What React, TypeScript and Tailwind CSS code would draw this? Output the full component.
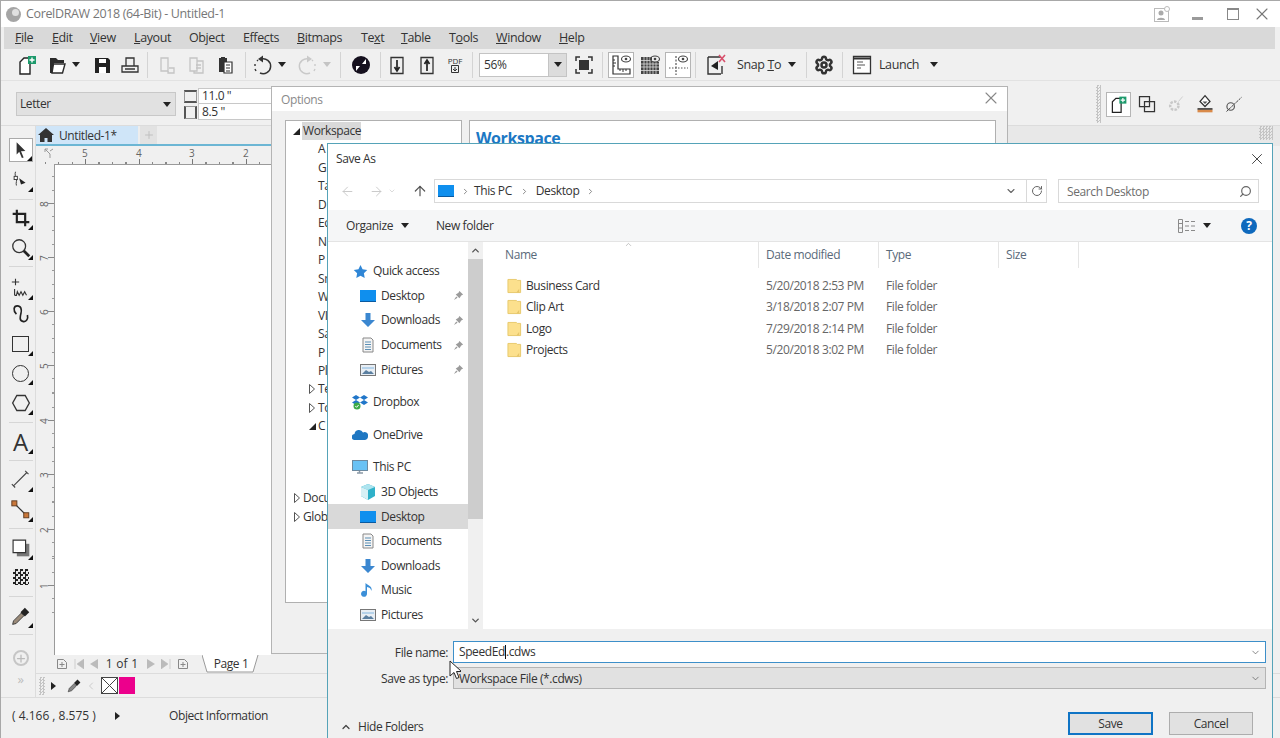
import React from 'react';
import { Settings, ChevronDown, RotateCw, Search, ArrowUp, ArrowLeft, ArrowRight, ChevronRight, ChevronUp, X, Plus } from 'lucide-react';

const MENUS = [
  { pre: '', key: 'F', post: 'ile', cls: 'w-[37px]' },
  { pre: '', key: 'E', post: 'dit', cls: 'w-[38px]' },
  { pre: '', key: 'V', post: 'iew', cls: 'w-[44px]' },
  { pre: '', key: 'L', post: 'ayout', cls: 'w-[55px]' },
  { pre: 'Ob', key: 'j', post: 'ect', cls: 'w-[54px]' },
  { pre: 'Effe', key: 'c', post: 'ts', cls: 'w-[54px]' },
  { pre: '', key: 'B', post: 'itmaps', cls: 'w-[64px]' },
  { pre: 'Te', key: 'x', post: 't', cls: 'w-[40px]' },
  { pre: '', key: 'T', post: 'able', cls: 'w-[48px]' },
  { pre: 'T', key: 'o', post: 'ols', cls: 'w-[47px]' },
  { pre: '', key: 'W', post: 'indow', cls: 'w-[63px]' },
  { pre: '', key: 'H', post: 'elp', cls: 'w-[40px]' },
];

const TREE = ['A', 'G', 'Ta', 'D', 'Ec', 'N', 'P', 'Sr', 'W', 'VI', 'Sa', 'P', 'Pl'];

const FILES = [
  { name: 'Business Card', date: '5/20/2018 2:53 PM' },
  { name: 'Clip Art', date: '3/18/2018 2:07 PM' },
  { name: 'Logo', date: '7/29/2018 2:14 PM' },
  { name: 'Projects', date: '5/20/2018 3:02 PM' },
];

function Ic({ children, cls = 'w-6 h-6' }: { children: React.ReactNode; cls?: string }) {
  return (
    <svg viewBox="0 0 24 24" className={`shrink-0 ${cls}`}>
      {children}
    </svg>
  );
}

const Caret = ({ cls = '' }: { cls?: string }) => (
  <svg viewBox="0 0 8 5" className={`w-2 h-[5px] shrink-0 ${cls}`}>
    <path d="M0 0h8L4 5z" fill="#222" />
  </svg>
);

const Sep = ({ cls = '' }: { cls?: string }) => <div className={`w-px h-[26px] bg-[#d4d4d4] shrink-0 ${cls}`} />;
const Grip = ({ cls = '' }: { cls?: string }) => (
  <div className={`shrink-0 bg-[repeating-conic-gradient(#c4c4c4_0_25%,transparent_0_50%)] bg-[length:3px_3px] ${cls}`} />
);

const NewDoc = ({ cls }: { cls?: string }) => (
  <Ic cls={cls}>
    <path d="M9 5h6v16H5V9z" fill="#fff" stroke="#222" strokeWidth="1.4" />
    <rect x="13" y="3" width="8" height="8" fill="#1d9a6c" />
    <path d="M17 4.500v5M14.500 7h5" stroke="#fff" strokeWidth="1.4" />
  </Ic>
);
const OpenFolder = () => (
  <Ic>
    <path d="M5 5h6l2 2h6v3H9l-2 10H5z" fill="#2a2a2a" />
    <path d="M8.500 11H20l-2.500 9H7z" fill="#fff" stroke="#2a2a2a" strokeWidth="1.4" />
  </Ic>
);
const Floppy = () => (
  <Ic>
    <path d="M5 5h13l2 2v13H5z" fill="#222" />
    <rect x="9" y="6" width="7" height="4" fill="#fff" />
    <rect x="9" y="14" width="7" height="6" fill="#fff" />
  </Ic>
);
const Printer = () => (
  <Ic>
    <path d="M8 13V5h8v8M4 13h16v6H4zM7 16h10" fill="none" stroke="#333" strokeWidth="1.3" />
  </Ic>
);
const GreyDoc = ({ two }: { two?: boolean }) => (
  <Ic>
    <path d="M6 5h7v13H6z" fill="none" stroke="#c4c4c4" strokeWidth="1.3" />
    <path d={two ? 'M13 8h6v12h-9v-2M12 12h5M12 15h5' : 'M14 15h5v5h-6v-2'} fill="none" stroke="#c4c4c4" strokeWidth="1.3" />
  </Ic>
);
const Paste = () => (
  <Ic>
    <path d="M6 5h8v14H6z" fill="#333" />
    <path d="M8 4h4v3H8z" fill="#333" />
    <path d="M11 9h8v11h-8z" fill="#fff" stroke="#333" strokeWidth="1.2" />
    <path d="M13 12h4M13 15h4M13 18h4" stroke="#333" strokeWidth="1.1" />
  </Ic>
);
const Undo = ({ grey }: { grey?: boolean }) => {
  const c = grey ? '#c9c9c9' : '#333';
  return (
    <Ic>
      <g transform={grey ? 'matrix(-1 0 0 1 24 0)' : undefined}>
        <path d="M10 6a7.500 7.500 0 1 1-1 14" fill="none" stroke={c} strokeWidth="1.5" />
        <path d="M5 18l-1-2M4 13v-2M6 8l1-1" stroke={c} strokeWidth="1.4" />
        <path d="M7 6l5-3.500v7z" fill={c} />
      </g>
    </Ic>
  );
};
const CorelBall = () => (
  <Ic>
    <circle cx="12" cy="12" r="9" fill="#15101e" />
    <path d="M13 11l4-5v5zM11 13l-4 5v-5z" fill="#fff" />
  </Ic>
);
const BoxArrow = ({ up }: { up?: boolean }) => (
  <Ic>
    <path d="M6 4.500h12v16H6z" fill="none" stroke="#333" strokeWidth="1.3" />
    <path d={up ? 'M12 18V9M9.500 11l2.500-4 2.500 4' : 'M12 7v9M9.500 14l2.500 4 2.500-4'} fill="none" stroke="#222" strokeWidth="1.7" />
  </Ic>
);
const FullPage = () => (
  <Ic>
    <rect x="7" y="7" width="10" height="10" fill="#333" />
    <path d="M4 8V4h4M16 4h4v4M20 16v4h-4M8 20H4v-4" fill="none" stroke="#333" strokeWidth="1.5" />
  </Ic>
);
const Eye = () => (
  <>
    <ellipse cx="17" cy="6" rx="4.500" ry="3" fill="none" stroke="#444" strokeWidth="1.1" />
    <circle cx="17" cy="6" r="1.300" fill="#444" />
  </>
);
const Rulers = () => (
  <Ic>
    <path d="M4 3h5v13h12v5H4z" fill="#fff" stroke="#333" strokeWidth="1.2" />
    <path d="M11 16v2M14 16v3M17 16v2M4 7h2M4 10h3M4 13h2" stroke="#333" />
    <Eye />
  </Ic>
);
const GridEye = () => (
  <Ic>
    <path d="M3 4h11v5h7v12H3z" fill="#444" />
    <path d="M6 4v17M9 4v17M12 4v17M15 9v12M18 9v12M3 7.500h11M3 11h18M3 14h18M3 17.500h18" stroke="#ddd" strokeWidth=".8" />
    <Eye />
  </Ic>
);
const Guides = () => (
  <Ic>
    <path d="M10 3v19" stroke="#333" strokeDasharray="2 1.500" />
    <path d="M3 15h19" stroke="#555" strokeDasharray="1.500 1.500" />
    <Eye />
  </Ic>
);
const SnapOff = () => (
  <Ic>
    <path d="M4 4h13M4 4v17h13M18 13v8" fill="none" stroke="#333" strokeWidth="1.4" />
    <path d="M14 8l-7 5 7 4z" fill="#222" />
    <path d="M15 2l6 7M21 2l-6 7" stroke="#d8506c" strokeWidth="1.6" />
  </Ic>
);
const Launch = () => (
  <Ic>
    <path d="M3.500 3.500h17v17h-17z" fill="#fff" stroke="#333" strokeWidth="1.3" />
    <path d="M3 5.500h18" stroke="#333" strokeWidth="2" />
    <path d="M7 9h6M7 12h8M7 15h4" stroke="#555" strokeWidth="1.2" />
  </Ic>
);

const Corner = () => (
  <svg viewBox="0 0 5 5" className="absolute right-0 bottom-0 w-[5px] h-[5px]">
    <path d="M5 0v5H0z" fill="#111" />
  </svg>
);

const ToolBtn = ({ children, cls = '', corner = true }: { children: React.ReactNode; cls?: string; corner?: boolean }) => (
  <div className={`relative w-6 h-6 flex items-center justify-center shrink-0 ${cls}`}>
    {children}
    {corner && <Corner />}
  </div>
);
const ToolSep = ({ cls = '' }: { cls?: string }) => <div className={`w-[24px] h-px bg-[#d6d6d6] shrink-0 ${cls}`} />;

function Toolbox() {
  return (
    <div className="w-[32px] ml-[3px] pl-[2px] shrink-0 flex flex-col items-center pt-[12px] border-r border-r-[#dcdcdc]">
      <div className="w-[24px] h-[24px] border border-[#aaa] bg-white relative flex items-center justify-center">
        <svg viewBox="0 0 16 20" className="w-[14px] h-[18px]"><path d="M3 1l10 10-5 .5 3 7-2 .5-3-7-3 3z" fill="#333" /></svg>
        <Corner />
      </div>
      <ToolBtn cls="mt-[6px]">
        <Ic cls="w-[22px] h-[22px]">
          <path d="M6 3c-1 3 0 5 1 7s-1 5 0 8" fill="none" stroke="#333" />
          <rect x="4.500" y="8" width="3.500" height="3.500" fill="#fff" stroke="#333" />
          <path d="M10 10l7 5-5 2z" fill="#222" />
        </Ic>
      </ToolBtn>
      <ToolSep cls="mt-[7px]" />
      <ToolBtn cls="mt-[6px]">
        <Ic cls="w-[20px] h-[20px]"><path d="M7 2v15h15M2 7h15v15" fill="none" stroke="#222" strokeWidth="2.6" /></Ic>
      </ToolBtn>
      <ToolBtn cls="mt-[6px]">
        <Ic cls="w-[22px] h-[22px]">
          <circle cx="10" cy="10" r="7" fill="none" stroke="#333" strokeWidth="1.4" />
          <path d="M15 15l6 6" stroke="#222" strokeWidth="3" />
        </Ic>
      </ToolBtn>
      <ToolSep cls="mt-[6px]" />
      <ToolBtn cls="mt-[9px]">
        <Ic cls="w-[22px] h-[22px]">
          <path d="M6 2v7M2 5.500h8" stroke="#333" strokeWidth="1.2" />
          <path d="M5 20v-7M5 20h2l1-4 2 4 2-4 2 4 2-4 2 4" fill="none" stroke="#333" strokeWidth="1.2" />
        </Ic>
      </ToolBtn>
      <ToolBtn cls="mt-[3px]" corner={false}>
        <Ic cls="w-[22px] h-[22px]">
          <path d="M7 11C3 7 4 2 8 2s5 4 4 8-2 8 2 9 6-3 5-7" fill="none" stroke="#222" strokeWidth="1.8" />
        </Ic>
      </ToolBtn>
      <ToolBtn cls="mt-[5px]">
        <div className="w-[17px] h-[16px] border-[1.5px] border-[#333]" />
      </ToolBtn>
      <ToolBtn cls="mt-[5px]">
        <div className="w-[17px] h-[17px] rounded-full border-[1.5px] border-[#333]" />
      </ToolBtn>
      <ToolBtn cls="mt-[6px]">
        <Ic cls="w-[20px] h-[20px]"><path d="M7 3h10l5 9-5 9H7l-5-9z" fill="none" stroke="#333" strokeWidth="1.6" /></Ic>
      </ToolBtn>
      <ToolSep cls="mt-[7px]" />
      <ToolBtn cls="mt-[7px]">
        <span className="text-[24px] leading-none text-[#333] tracking-normal">A</span>
      </ToolBtn>
      <ToolSep cls="mt-[6px]" />
      <ToolBtn cls="mt-[7px]">
        <Ic cls="w-[20px] h-[20px]"><path d="M3 19L19 3M1 17l4 4M17 1l4 4" fill="none" stroke="#444" strokeWidth="1.3" /></Ic>
      </ToolBtn>
      <ToolBtn cls="mt-[6px]">
        <Ic cls="w-[22px] h-[22px]">
          <path d="M5 5l13 13" stroke="#333" strokeWidth="1.3" />
          <rect x="2" y="2" width="5.500" height="5.500" fill="#c9773a" stroke="#5c3a20" />
          <rect x="15" y="15" width="5.500" height="5.500" fill="#c9773a" stroke="#5c3a20" />
        </Ic>
      </ToolBtn>
      <ToolSep cls="mt-[6px]" />
      <ToolBtn cls="mt-[7px]">
        <Ic cls="w-[20px] h-[20px]">
          <path d="M7 7h15v15H7z" fill="#777" />
          <path d="M2.500 2.500h15v15h-15z" fill="#fff" stroke="#333" strokeWidth="1.4" />
        </Ic>
      </ToolBtn>
      <ToolBtn cls="mt-[5px]" corner={false}>
        <div className="w-[16px] h-[16px] bg-[repeating-conic-gradient(#222_0_25%,#e8e8e8_0_50%)] bg-[length:5px_5px]" />
      </ToolBtn>
      <ToolSep cls="mt-[7px]" />
      <ToolBtn cls="mt-[7px]">
        <Ic cls="w-[21px] h-[21px]">
          <path d="M3 21l1-4 9-9 3 3-9 9z" fill="#9a8a78" stroke="#333" />
          <path d="M12 7l5-5 5 5-5 5z" fill="#222" />
        </Ic>
      </ToolBtn>
      <ToolSep cls="mt-[6px]" />
      <div className="mt-[15px] w-[16px] h-[16px] rounded-full border-2 border-[#c6c6c6] flex items-center justify-center">
        <Plus className="w-[13px] h-[13px] text-[#bbb]" strokeWidth={2.5} />
      </div>
      <span className="mt-[7px] text-[13px] leading-none text-[#bdbdbd]">»</span>
    </div>
  );
}

function TopRuler() {
  const xs = [85, 139, 192, 246];
  return (
    <svg width="236" height="18" className="shrink-0">
      <path d="M9 3l5 5M9 3h3M9 3v3M14 5l3-2M14 8v4" fill="none" stroke="#999" />
      {xs.map((x, i) => (
        <g key={x}>
          <text x={x - 36 - 3} y="11" fontSize="10" fill="#666">{5 - i}</text>
          <path d={`M${x - 36 + 0.5} 13v5`} stroke="#777" />
          {[-40, -27, -13, 13, 27, 40].map((d) => (
            <path key={d} d={`M${x - 36 + d + 0.5} 16v2`} stroke="#888" />
          ))}
        </g>
      ))}
    </svg>
  );
}

function VRuler() {
  const ys = [203, 257, 311, 365, 420, 474, 529, 585];
  return (
    <svg width="18" height="491" className="shrink-0">
      {ys.map((y, i) => (
        <g key={y}>
          <text x="0" y="0" fontSize="10" fill="#666" transform={`translate(12 ${y - 164 + 4}) rotate(-90)`}>{8 - i}</text>
          <path d={`M12 ${y - 164 + 0.5}h6`} stroke="#888" />
          {[-27, -13, 13, 27].map((d) => (
            <path key={d} d={`M16 ${y - 164 + d + 0.5}h2`} stroke="#999" />
          ))}
        </g>
      ))}
    </svg>
  );
}

const Tri = ({ open, cls = '' }: { open?: boolean; cls?: string }) =>
  open ? (
    <svg viewBox="0 0 7 7" className={`w-[7px] h-[7px] shrink-0 ${cls}`}><path d="M7 0v7H0z" fill="#222" /></svg>
  ) : (
    <svg viewBox="0 0 6 10" className={`w-[6px] h-[10px] shrink-0 ${cls}`}><path d="M.5.500l5 4.500-5 4.500z" fill="#fff" stroke="#555" /></svg>
  );

function OptionsDialog() {
  return (
    <div className="absolute left-[270px] top-[85px] w-[737px] h-[568px] border border-[#b4b4b4] bg-[#f0f0f0] flex flex-col">
      <div className="h-[24px] bg-white flex items-center justify-between pl-[9px] pr-[6px] shrink-0">
        <span className="text-[12px] text-[#8a8a8a] pt-[1px]">Options</span>
        <X className="w-[20px] h-[20px] text-[#888] -translate-y-[1px]" strokeWidth={1.3} />
      </div>
      <div className="flex gap-[7px] pl-[13px] pt-[9px] pr-[11px]">
        <div className="w-[177px] h-[483px] border border-[#b0b0b0] bg-white text-[12px] text-[#333]">
          <div className="flex items-center h-[18px] mt-[1px] pl-[7px] gap-[2px]">
            <Tri open />
            <span className="bg-[#d9d9d9] px-px w-[59px]">Workspace</span>
          </div>
          <div className="flex flex-col">
            {TREE.map((t, i) => (
              <div key={i} className="h-[18.5px] pl-[32px] leading-[18px]">{t}</div>
            ))}
            <div className="h-[19px] -mt-[1.5px] pl-[23px] flex items-center gap-[3px]"><Tri /> Te</div>
            <div className="h-[19px] pl-[23px] flex items-center gap-[3px]"><Tri /> To</div>
            <div className="h-[18px] pl-[23px] flex items-center gap-[2px]"><Tri open /> C</div>
            <div className="h-[18.5px] pl-[8px] mt-[54px] flex items-center gap-[3px]"><Tri /> Docu</div>
            <div className="h-[19px] pl-[8px] flex items-center gap-[3px]"><Tri /> Glob</div>
          </div>
        </div>
        <div className="flex-1 h-[483px] border border-[#b0b0b0] bg-white px-[6px] pt-[6px]">
          <div className="text-[16px] font-bold text-[#1c78c4] leading-[22px]">Workspace</div>
        </div>
      </div>
    </div>
  );
}

const Desktop = () => (
  <svg viewBox="0 0 16 14" className="w-[16px] h-[14px] shrink-0"><rect width="16" height="12" y="1" fill="#0f8fee" /><rect y="12" width="16" height="1" fill="#0a5aa0" /></svg>
);
const DownloadsI = () => (
  <svg viewBox="0 0 16 16" className="w-[16px] h-[16px] shrink-0"><path d="M5.500 1h5v7H15l-7 7-7-7h4.500z" fill="#3b87d0" /></svg>
);
const DocI = () => (
  <svg viewBox="0 0 16 16" className="w-[16px] h-[16px] shrink-0"><path d="M3 1h8l2 2v12H3z" fill="#f4f4f4" stroke="#888" /><path d="M5 5h6M5 7.500h6M5 10h6M5 12.500h6" stroke="#5b8fb5" /></svg>
);
const PicI = () => (
  <svg viewBox="0 0 16 14" className="w-[16px] h-[14px] shrink-0"><rect x=".5" y="1.500" width="15" height="11" fill="#e8eef4" stroke="#777" /><path d="M2 11l4-4 3 2 2-1 3 3z" fill="#5a7fa0" /><path d="M2 4h12v2H2z" fill="#b5d2ea" /></svg>
);
const Pin = () => (
  <svg viewBox="0 0 12 12" className="w-[11px] h-[11px] shrink-0"><path d="M7 1l4 4-2 1-2 3-4-4 3-2zM3.500 7L1 11l4-2.500" fill="#9b9b9b" /></svg>
);
const Star = () => (
  <svg viewBox="0 0 16 16" className="w-[15px] h-[15px] shrink-0"><path d="M8 1l2.200 4.600 5 .7-3.600 3.500.9 5L8 12.400 3.500 14.800l.9-5L.8 6.300l5-.7z" fill="#2f86d6" /></svg>
);
const DropboxI = () => (
  <svg viewBox="0 0 16 16" className="w-[16px] h-[16px] shrink-0">
    <path d="M4 1l4 2.500L4 6 0 3.500zM12 1l4 2.500L12 6 8 3.500zM4 6l4 2.500L4 11 0 8.500zM12 6l4 2.500-4 2.500-4-2.500z" fill="#2076c9" />
    <circle cx="5" cy="12" r="3.500" fill="#3daa48" />
    <path d="M3.300 12l1.300 1.300 2-2.300" fill="none" stroke="#fff" />
  </svg>
);
const Cloud = () => (
  <svg viewBox="0 0 16 11" className="w-[16px] h-[11px] shrink-0"><path d="M3 11a3 3 0 0 1-.5-6A4.500 4.500 0 0 1 11 3.500 3.500 3.500 0 0 1 16 7.500 3.500 3.500 0 0 1 13 11z" fill="#1f77c2" /></svg>
);
const PcI = () => (
  <svg viewBox="0 0 16 16" className="w-[16px] h-[16px] shrink-0"><rect x=".5" y="1.500" width="15" height="10" fill="#69c2f5" stroke="#6d8aa0" /><path d="M5 14h6M7.500 12v2" stroke="#8a99a6" strokeWidth="1.500" /></svg>
);
const Cube = () => (
  <svg viewBox="0 0 16 16" className="w-[16px] h-[16px] shrink-0"><path d="M8 0l7 3v9l-7 4-7-4V3z" fill="#2fb1c9" /><path d="M8 0l7 3-7 3-7-3z" fill="#aee4ef" /><path d="M1 3l7 3v10l-7-4z" fill="#d7f0f5" /></svg>
);
const Note = () => (
  <svg viewBox="0 0 16 16" className="w-[16px] h-[16px] shrink-0"><path d="M7 1v10.500a3 3 0 1 1-1.500-2.300V1c3 3 7 3 6 8-1-3-2-3.500-4.500-4z" fill="#3b8fd8" /></svg>
);
const Folder = () => (
  <svg viewBox="0 0 16 16" className="w-[15px] h-[16px] shrink-0"><path d="M1 1h9l1 1 3.500 0V15H1z" fill="#fce08d" stroke="#e6c76a" /><path d="M13 11v4h-3z" fill="#e6c56a" /></svg>
);

function NavRow({ icon, label, pin, child, sel, cls = '' }: { icon: React.ReactNode; label: string; pin?: boolean; child?: boolean; sel?: boolean; cls?: string }) {
  return (
    <div className={`h-[24.6px] flex items-center gap-[5px] shrink-0 ${child ? 'pl-[32px]' : 'pl-[24px]'} ${sel ? 'bg-[#d9d9d9]' : ''} ${cls}`}>
      <div className="w-[16px] flex justify-center shrink-0">{icon}</div>
      <span className="flex-1">{label}</span>
      {pin && <div className="mr-[4px]"><Pin /></div>}
    </div>
  );
}

function SaveAsDialog() {
  return (
    <div className="absolute left-[326px] top-[142px] w-[946px] h-[600px] bg-white border border-[#55a3b8] flex flex-col text-[12px] text-[#333]">
      <div className="h-[31px] pb-[2px] flex items-center justify-between pl-[8px] pr-[6px] shrink-0">
        <span>Save As</span>
        <X className="w-[18px] h-[18px] text-[#333]" strokeWidth={1.2} />
      </div>
      <div className="h-[35px] flex items-start pt-[4px] shrink-0">
        <div className="w-[106px] h-[24px] flex items-center shrink-0 text-[#c8c8c8]">
          <ArrowLeft className="ml-[12px] w-[15px] h-[15px]" strokeWidth={1.5} />
          <ArrowRight className="ml-[14px] w-[15px] h-[15px]" strokeWidth={1.5} />
          <ChevronDown className="ml-[4px] w-[8px] h-[8px]" strokeWidth={2} />
          <ArrowUp className="ml-[16px] w-[16px] h-[16px] text-[#555]" strokeWidth={1.8} />
        </div>
        <div className="w-[613px] h-[24px] border border-[#d9d9d9] flex items-center shrink-0">
          <div className="ml-[3px]"><Desktop /></div>
          <ChevronRight className="ml-[7px] w-[9px] h-[9px] text-[#666]" strokeWidth={2} />
          <span className="ml-[4px]">This PC</span>
          <ChevronRight className="ml-[8px] w-[9px] h-[9px] text-[#666]" strokeWidth={2} />
          <span className="ml-[7px]">Desktop</span>
          <ChevronRight className="ml-[7px] w-[9px] h-[9px] text-[#666]" strokeWidth={2} />
          <div className="ml-auto w-[30px] flex justify-center"><ChevronDown className="w-[12px] h-[12px] text-[#666]" strokeWidth={2.2} /></div>
          <div className="w-[20px] h-full border-l border-l-[#d9d9d9] flex items-center justify-center"><RotateCw className="w-[12px] h-[12px] text-[#666]" strokeWidth={2} /></div>
        </div>
        <div className="ml-[11px] w-[201px] h-[24px] border border-[#d9d9d9] flex items-center justify-between pl-[8px] pr-[6px] shrink-0">
          <span className="text-[#6d6d6d] pt-[1px]">Search Desktop</span>
          <Search className="w-[13px] h-[13px] text-[#666] -scale-x-100" strokeWidth={2.2} />
        </div>
      </div>
      <div className="h-[32px] bg-[#f5f6f7] flex items-center shrink-0 border-b border-b-[#e4e4e4]">
        <span className="ml-[18px]">Organize</span>
        <Caret cls="ml-[8px]" />
        <span className="ml-[27px]">New folder</span>
        <svg viewBox="0 0 18 14" className="ml-auto w-[18px] h-[14px]"><path d="M.5.500h4v13h-4zM.5 4.500h4M.5 9h4M7 2.500h4M13 2.500h4M7 7h4M13 7h4M7 11.500h4M13 11.500h4" fill="none" stroke="#8a8a8a" /></svg>
        <Caret cls="ml-[7px]" />
        <div className="ml-[30px] mr-[15px] w-[16px] h-[16px] rounded-full bg-[#0e69bd] text-white font-bold text-[12px] leading-[16px] text-center">?</div>
      </div>
      <div className="flex-1 min-h-0 flex">
        <div className="w-[140px] pt-[17px] shrink-0 flex flex-col">
          <NavRow icon={<Star />} label="Quick access" />
          <NavRow icon={<Desktop />} label="Desktop" pin child />
          <NavRow icon={<DownloadsI />} label="Downloads" pin child />
          <NavRow icon={<DocI />} label="Documents" pin child />
          <NavRow icon={<PicI />} label="Pictures" pin child />
          <NavRow icon={<DropboxI />} label="Dropbox" cls="mt-[8px]" />
          <NavRow icon={<Cloud />} label="OneDrive" cls="mt-[8px]" />
          <NavRow icon={<PcI />} label="This PC" cls="mt-[8px]" />
          <NavRow icon={<Cube />} label="3D Objects" child />
          <NavRow icon={<Desktop />} label="Desktop" child sel />
          <NavRow icon={<DocI />} label="Documents" child />
          <NavRow icon={<DownloadsI />} label="Downloads" child />
          <NavRow icon={<Note />} label="Music" child />
          <NavRow icon={<PicI />} label="Pictures" child />
        </div>
        <div className="w-[15px] shrink-0 bg-[#f0f0f0] flex flex-col items-center h-[387px]">
          <ChevronUp className="h-[17px] w-[11px] text-[#555] shrink-0" strokeWidth={3} />
          <div className="w-full h-[260px] bg-[#cdcdcd] shrink-0" />
          <ChevronDown className="mt-auto h-[17px] w-[11px] text-[#555] shrink-0" strokeWidth={3} />
        </div>
        <div className="flex-1 relative">
          <ChevronUp className="absolute left-[140px] -top-[2px] w-[11px] h-[9px] text-[#999]" strokeWidth={1.5} />
          <div className="grid grid-cols-[276px_120px_120px_80px] h-[26px] text-[#5a6a7a] items-center">
            <span className="pl-[22px] h-full flex items-center border-r border-r-[#e5e5e5]">Name</span>
            <span className="pl-[7px] h-full flex items-center border-r border-r-[#e5e5e5]">Date modified</span>
            <span className="pl-[7px] h-full flex items-center border-r border-r-[#e5e5e5]">Type</span>
            <span className="pl-[7px] h-full flex items-center border-r border-r-[#e5e5e5]">Size</span>
          </div>
          <div className="pt-[7px]">
            {FILES.map((f) => (
              <div key={f.name} className="grid grid-cols-[276px_120px_120px_80px] h-[21.5px] items-center">
                <div className="flex items-center gap-[4px] pl-[24px]">
                  <Folder />
                  <span>{f.name}</span>
                </div>
                <span className="pl-[7px] text-[#666]">{f.date}</span>
                <span className="pl-[7px] text-[#666]">File folder</span>
                <span />
              </div>
            ))}
          </div>
        </div>
      </div>
      <div className="h-[113px] shrink-0 bg-[#f0f0f0] flex flex-col pr-[6px]">
        <div className="mt-[12px] h-[22px] flex items-center">
          <span className="w-[120px] text-right shrink-0 pt-[1px]">File name:</span>
          <div className="ml-[5px] flex-1 h-full bg-white border border-[#3d8fc9] flex items-center pl-[5px] pr-[4px]">
            <span>SpeedEd</span>
            <span className="w-px h-[14px] bg-[#111]" />
            <span>.cdws</span>
            <ChevronDown className="ml-auto w-[11px] h-[11px] text-[#555]" strokeWidth={1.5} />
          </div>
        </div>
        <div className="mt-[4px] h-[22px] flex items-center">
          <span className="w-[120px] text-right shrink-0 pt-[1px]">Save as type:</span>
          <div className="ml-[5px] flex-1 h-full bg-[#e1e1e1] border border-[#b4b4b4] flex items-center pl-[5px] pr-[4px]">
            <span className="pt-[1px]">Workspace File (*.cdws)</span>
            <ChevronDown className="ml-auto w-[11px] h-[11px] text-[#555]" strokeWidth={1.5} />
          </div>
        </div>
        <div className="mt-[23px] h-[23px] flex items-center">
          <ChevronUp className="ml-[12px] mt-[6px] w-[12px] h-[12px] text-[#444]" strokeWidth={2.5} />
          <span className="ml-[6px] pt-[7px]">Hide Folders</span>
          <div className="ml-auto w-[85px] h-[23px] bg-[#e1e1e1] border-2 border-[#0f74c5] flex items-center justify-center">Save</div>
          <div className="ml-[16px] mr-[13px] w-[84px] h-[23px] bg-[#e1e1e1] border border-[#adadad] flex items-center justify-center">Cancel</div>
        </div>
      </div>
    </div>
  );
}

export default function App() {
  return (
    <div className="relative w-[1280px] h-[738px] overflow-hidden bg-[#f0f0f0] flex flex-col font-['Open_Sans',sans-serif] text-[12px] tracking-[-0.4px] text-[#333] border-l border-l-[#a8a8a8] border-t border-t-[#a8a8a8]">
      <div className="h-[26px] bg-white flex items-center shrink-0 pl-[5px]">
        <div className="w-[15px] h-[15px] rounded-full bg-[#a5a5a5] flex items-center justify-center">
          <div className="w-[7px] h-[7px] rounded-full bg-[#e0e0e0] translate-x-[2px] -translate-y-[2px]" />
        </div>
        <span className="ml-[5px] text-[#777] text-[12.5px] tracking-[-0.35px] pt-[1px]">CorelDRAW 2018 (64-Bit) - Untitled-1</span>
        <svg viewBox="0 0 16 16" className="ml-auto w-[16px] h-[16px]">
          <rect x=".5" y="2.500" width="14" height="13" fill="none" stroke="#bbb" />
          <circle cx="7" cy="7" r="2.500" fill="#aaa" />
          <path d="M3 14c0-3 8-3 8 0z" fill="#aaa" />
          <circle cx="13" cy="3" r="2.500" fill="#fff" stroke="#bbb" />
        </svg>
        <div className="ml-[22px] w-[11px] h-[3px] bg-[#9a9a9a] mt-[8px]" />
        <div className="ml-[24.500px] w-[12px] h-[12px] border border-[#888] border-t-[2px]" />
        <X className="ml-[13px] mr-[8px] w-[20px] h-[20px] text-[#777]" strokeWidth={1.3} />
      </div>
      <div className="h-[22px] ml-[3px] mr-[5px] bg-[#d9d9d9] flex items-center pl-[11px] text-[12.5px] shrink-0">
        {MENUS.map((m) => (
          <span key={m.key + m.post} className={`shrink-0 ${m.cls}`}>
            {m.pre}<u>{m.key}</u>{m.post}
          </span>
        ))}
      </div>
      <div className="h-[32px] flex items-center pl-[14px] shrink-0 border-b border-b-[#e2e2e2]">
        <NewDoc />
        <div className="ml-[6px]"><OpenFolder /></div>
        <Caret cls="ml-[3px]" />
        <div className="ml-[10px]"><Floppy /></div>
        <div className="ml-[4px]"><Printer /></div>
        <Sep cls="ml-[5px]" />
        <div className="ml-[7px]"><GreyDoc /></div>
        <div className="ml-[5px]"><GreyDoc two /></div>
        <div className="ml-[5px]"><Paste /></div>
        <Sep cls="ml-[8px]" />
        <div className="ml-[5px]"><Undo /></div>
        <Caret cls="ml-[3px]" />
        <div className="ml-[9px]"><Undo grey /></div>
        <svg viewBox="0 0 8 5" className="ml-[4px] w-2 h-[5px]"><path d="M0 0h8L4 5z" fill="#c4c4c4" /></svg>
        <Sep cls="ml-[9px]" />
        <div className="ml-[8px]"><CorelBall /></div>
        <Sep cls="ml-[7px]" />
        <div className="ml-[4px]"><BoxArrow /></div>
        <div className="ml-[6px]"><BoxArrow up /></div>
        <div className="ml-[4px] w-6 h-6 flex flex-col items-center justify-center">
          <span className="text-[8px] leading-[9px] tracking-normal">PDF</span>
          <svg viewBox="0 0 8 8" className="w-[8px] h-[8px]"><path d="M.5.500h7v7h-7zM4 2v4M2 4l2 2 2-2" fill="none" stroke="#333" /></svg>
        </div>
        <Sep cls="ml-[5px]" />
        <div className="ml-[6px] w-[88px] h-[24px] bg-white border border-[#c4c4c4] flex items-center pl-[4px] shrink-0">
          <span className="pt-[1px]">56%</span>
          <div className="ml-auto w-[18px] h-full bg-[#dcdcdc] border-l border-l-[#c4c4c4] flex items-center justify-center"><Caret /></div>
        </div>
        <div className="ml-[5px]"><FullPage /></div>
        <Sep cls="ml-[6px]" />
        <div className="ml-[5px] border border-[#b5b5b5] bg-white"><Rulers /></div>
        <div className="ml-[4px]"><GridEye /></div>
        <div className="ml-[3px] border border-[#b5b5b5] bg-white"><Guides /></div>
        <Sep cls="ml-[4px]" />
        <div className="ml-[8px]"><SnapOff /></div>
        <span className="ml-[9px] w-[41px] shrink-0 text-[12.5px] whitespace-nowrap pt-[2px]">Snap <u>T</u>o</span>
        <Caret cls="ml-[10px]" />
        <Sep cls="ml-[10px]" />
        <Settings className="ml-[7px] w-[20px] h-[20px] text-[#333]" strokeWidth={3} />
        <Sep cls="ml-[8px]" />
        <div className="ml-[7px]"><Launch /></div>
        <span className="ml-[5px] w-[44px] shrink-0 text-[12.5px] pt-[2px]">Launch</span>
        <Caret cls="ml-[7px]" />
      </div>
      <div className="h-[45px] pt-[2px] flex items-center shrink-0 pl-[15px] border-b border-b-[#dcdcdc]">
        <div className="w-[160px] h-[24px] bg-[#e1e1e1] border border-[#c8c8c8] flex items-center justify-between pl-[3px] pr-[4px] shrink-0">
          <span>Letter</span>
          <Caret />
        </div>
        <div className="ml-[8px] w-[14px] flex flex-col gap-[3px] shrink-0">
          <div className="w-[13px] h-[13px] border-y-2 border-y-[#555] border-x border-x-[#999]" />
          <div className="w-[13px] h-[13px] border-x-2 border-x-[#555] border-y border-y-[#999]" />
        </div>
        <div className="w-[74px] shrink-0 flex flex-col">
          <div className="h-[16px] bg-white border border-[#c8c8c8] flex items-center pl-[3px]">11.0 "</div>
          <div className="h-[16px] bg-white border border-[#c8c8c8] border-t-0 flex items-center pl-[3px]">8.5 "</div>
        </div>
        <Grip cls="ml-[824px] w-[5px] h-[38px]" />
        <div className="ml-[5px] w-[25px] h-[25px] border border-[#b5b5b5] bg-white flex items-center justify-center"><NewDoc cls="w-[21px] h-[21px]" /></div>
        <Ic cls="ml-[6px] w-[20px] h-[20px]"><path d="M3 3h12v12H3zM9 9h12v12H9z" fill="none" stroke="#333" strokeWidth="1.5" /></Ic>
        <Ic cls="ml-[9px] w-[20px] h-[20px]"><circle cx="10" cy="14" r="5" fill="none" stroke="#c8c8c8" strokeWidth="3" strokeDasharray="3 1.500" /><path d="M15 9l5-6" stroke="#c8c8c8" /></Ic>
        <Ic cls="ml-[9px] w-[20px] h-[20px]"><path d="M12 2l6 7-6 6-6-6z" fill="#fff" stroke="#333" strokeWidth="1.5" /><path d="M9 9h6l-3 3z" fill="#555" /><rect x="3" y="17" width="18" height="2" fill="#333" /><rect x="3" y="19" width="18" height="3" fill="#d98a4a" /></Ic>
        <Ic cls="ml-[9px] w-[20px] h-[20px]"><circle cx="8" cy="15" r="4.500" fill="none" stroke="#555" strokeWidth="1.4" /><path d="M3 21L21 4" stroke="#444" strokeWidth="1.2" strokeDasharray="3 1" /></Ic>
      </div>
      <div className="flex-1 min-h-0 flex">
        <Toolbox />
        <div className="flex-1 min-w-0 flex flex-col">
          <div className="h-[20px] flex shrink-0 bg-[#e8e8e8]">
            <div className="w-[236px] h-full flex items-center shrink-0 border-b-2 border-b-[#6cb6d4] bg-[#ededed]">
              <div className="w-[102px] h-full bg-[#cfe5f8] flex items-center pl-[2px] gap-[5px] shrink-0">
                <svg viewBox="0 0 16 14" className="w-[16px] h-[14px]"><path d="M8 0l8 7h-2v7H9.500v-4h-3v4H2V7H0z" fill="#333" /></svg>
                <span className="pt-[1px]">Untitled-1*</span>
              </div>
              <div className="ml-[2px] w-[17px] h-[18px] bg-[#e2e2e2] flex items-center justify-center">
                <Plus className="w-[12px] h-[12px] text-[#c0c0c0]" strokeWidth={2} />
              </div>
            </div>
            <Grip cls="ml-auto mr-[7px] w-[14px] h-[14px]" />
          </div>
          <TopRuler />
          <div className="flex-1 min-h-0 flex">
            <VRuler />
            <div className="w-[217px] bg-white border-l border-t border-[#9a9a9a] shrink-0" />
          </div>
          <div className="h-[18px] flex items-center shrink-0 pl-[21px] bg-[#f0f0f0]">
            <svg viewBox="0 0 10 10" className="w-[10px] h-[10px]"><path d="M.5.500h6l3 3v6h-9zM5 3v5M2.500 5.500h5" fill="none" stroke="#888" /></svg>
            <svg viewBox="0 0 10 10" className="ml-[7px] w-[10px] h-[10px]"><path d="M1 0v10M10 0v10L3 5z" fill="#bbb" stroke="#bbb" strokeWidth=".6" /></svg>
            <svg viewBox="0 0 10 10" className="ml-[5px] w-[10px] h-[10px]"><path d="M9 0v10L1 5z" fill="#bbb" /></svg>
            <span className="ml-[4px] w-[38px] text-center shrink-0 tracking-[0.2px]">1 of 1</span>
            <svg viewBox="0 0 10 10" className="ml-[5px] w-[10px] h-[10px]"><path d="M1 0v10l8-5z" fill="#bbb" /></svg>
            <svg viewBox="0 0 10 10" className="ml-[5px] w-[10px] h-[10px]"><path d="M9 0v10M0 0v10l7-5z" fill="#bbb" stroke="#bbb" strokeWidth=".6" /></svg>
            <svg viewBox="0 0 10 10" className="ml-[7px] w-[10px] h-[10px]"><path d="M.5.500h6l3 3v6h-9zM5 3v5M2.500 5.500h5" fill="none" stroke="#888" /></svg>
            <div className="ml-[14px] w-[58px] h-full relative flex items-center justify-center shrink-0">
              <svg viewBox="0 0 58 18" className="absolute inset-0 w-[58px] h-[18px]"><path d="M0 0l5 17h46L56 0" fill="#fff" stroke="#999" /></svg>
              <span className="relative">Page 1</span>
            </div>
          </div>
          <div className="h-[24px] flex items-center shrink-0 border-t border-t-[#dcdcdc] pl-[3px]">
            <Grip cls="w-[6px] h-[18px]" />
            <svg viewBox="0 0 5 8" className="ml-[6px] w-[5px] h-[8px]"><path d="M0 0l5 4-5 4z" fill="#222" /></svg>
            <Ic cls="ml-[11px] w-[14px] h-[14px]"><path d="M2 22l2-6 8-8 4 4-8 8z" fill="#888" stroke="#333" /><path d="M12 7l6-6 5 5-6 6z" fill="#222" /></Ic>
            <ChevronRight className="ml-[4px] w-[12px] h-[12px] text-[#ccc] rotate-180" strokeWidth={2} />
            <div className="ml-[4px] w-[17px] h-[17px] border border-[#444] bg-white shrink-0 bg-[linear-gradient(45deg,transparent_48%,#444_48%,#444_52%,transparent_52%),linear-gradient(-45deg,transparent_48%,#444_48%,#444_52%,transparent_52%)]" />
            <div className="ml-[1px] w-[16px] h-[17px] bg-[#ec008c] shrink-0" />
          </div>
        </div>
      </div>
      <div className="h-[41px] shrink-0 border-t border-t-[#dcdcdc] flex items-center pl-[11px] pb-[5px]">
        <span className="w-[92px] shrink-0 tracking-normal">( 4.166 , 8.575 )</span>
        <svg viewBox="0 0 5 8" className="ml-[11px] w-[5px] h-[8px]"><path d="M0 0l5 4-5 4z" fill="#222" /></svg>
        <span className="ml-[49px]">Object Information</span>
      </div>

      <OptionsDialog />
      <SaveAsDialog />

      <svg viewBox="0 0 12 20" className="absolute left-[448px] top-[659px] w-[12px] h-[20px]">
        <path d="M1 1v15l4-3.500 2.500 6 2.500-1-2.500-6h5z" fill="#fff" stroke="#222" />
      </svg>
    </div>
  );
}
